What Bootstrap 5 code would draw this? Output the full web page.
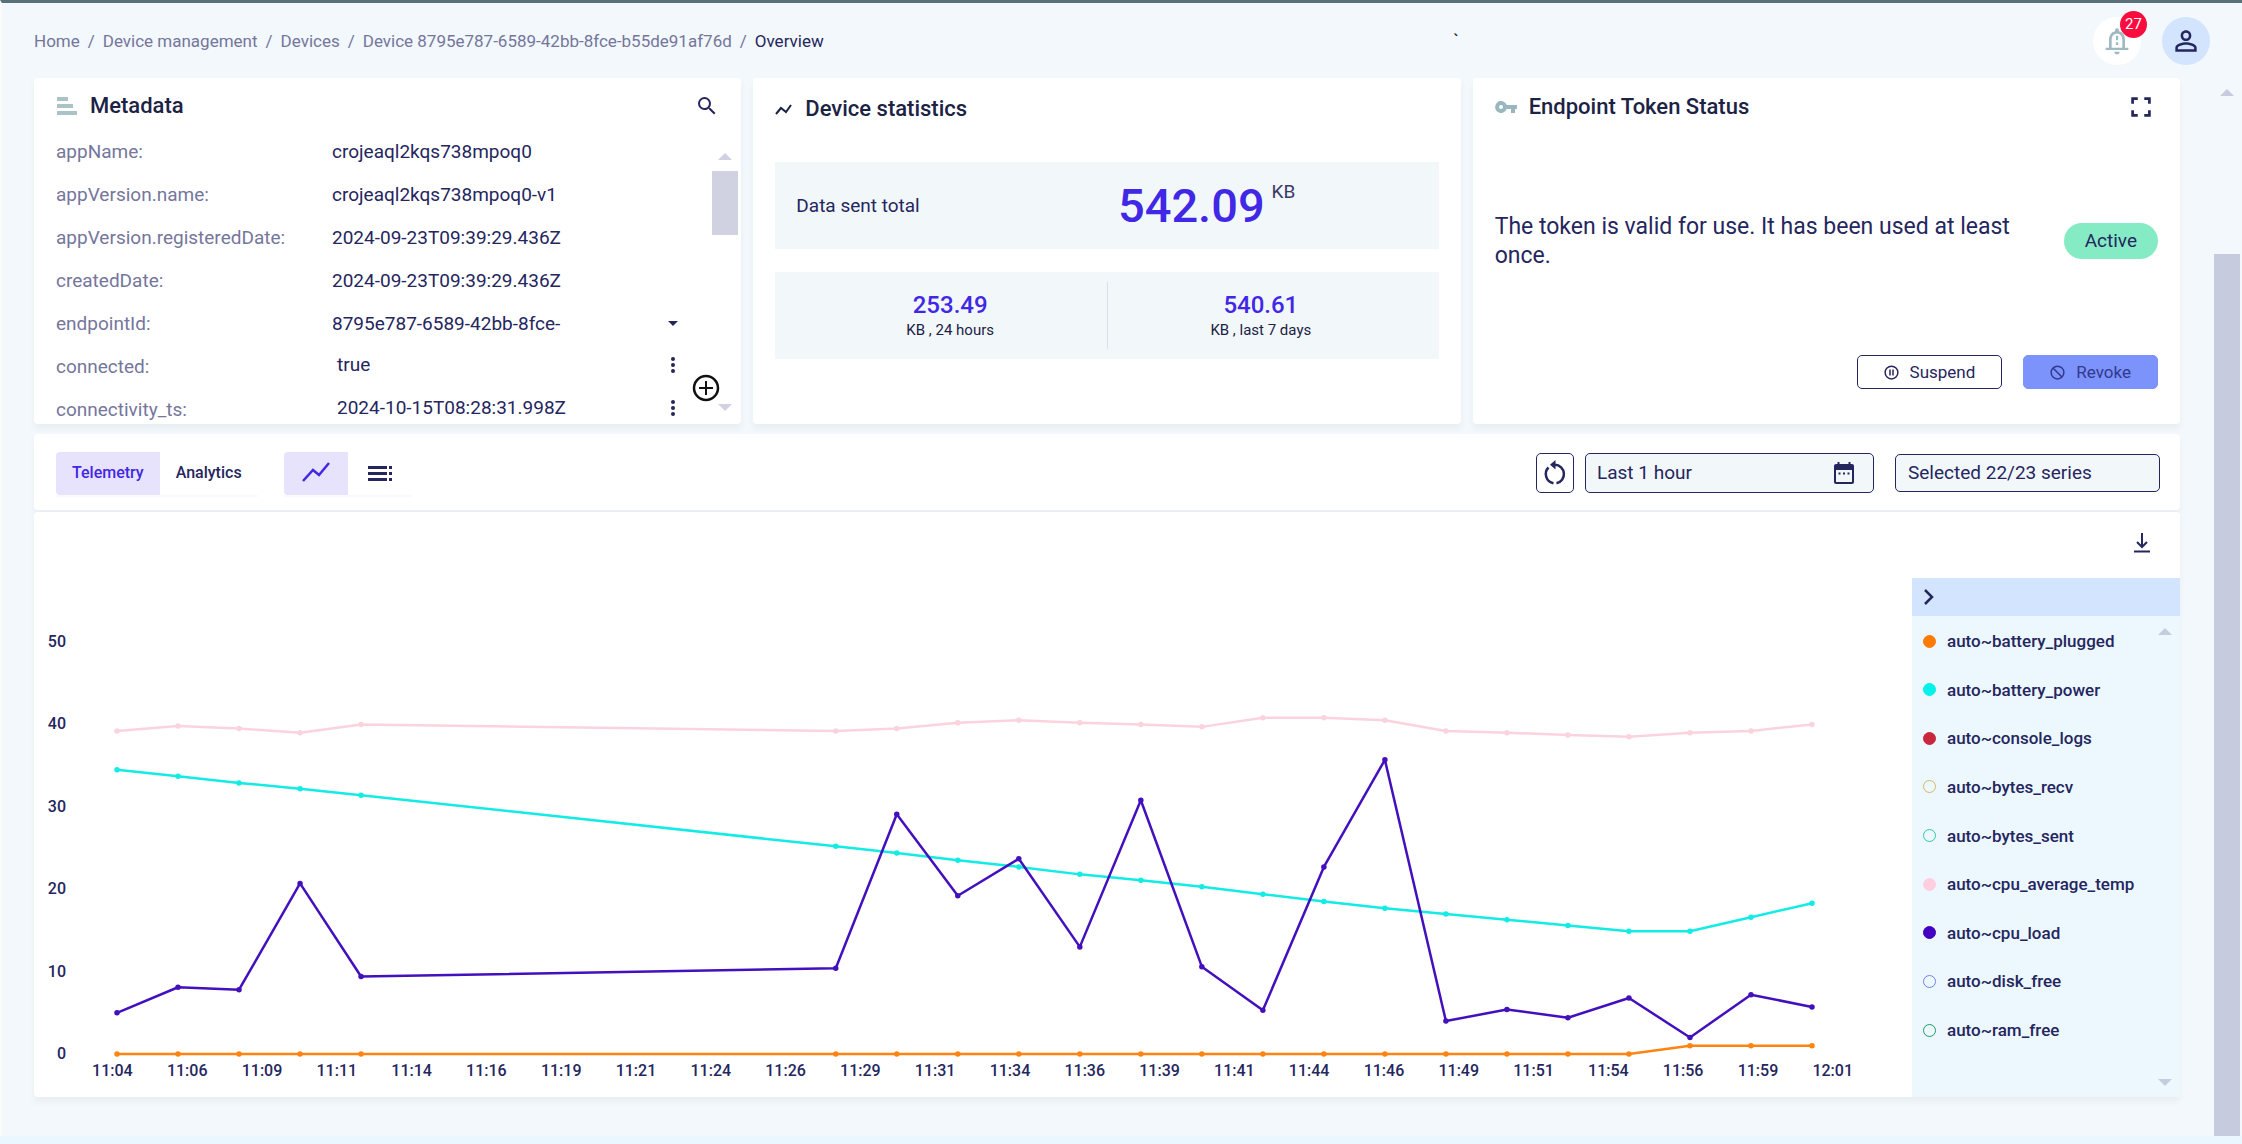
<!DOCTYPE html>
<html lang="en">
<head>
<meta charset="utf-8">
<meta name="viewport" content="width=device-width, initial-scale=1">
<title>Device overview</title>
<link href="https://cdn.jsdelivr.net/npm/bootstrap@5.3.0/dist/css/bootstrap.min.css" rel="stylesheet">
<style>
:root{--ink:#25265e;--title:#1c2244;--muted:#75769c;--accent:#4127e6;--page:#f2f8fb;--soft:#f2f7fa;--thumb:#c6cbdd;--sky:#d3e4ff}
body{font-family:Roboto,"Liberation Sans",sans-serif;color:var(--ink);background:#ebf7ff;font-size:19px;line-height:24px}
.shell{min-height:calc(100vh - 8px);background:var(--page);border-top:3px solid #5b7179;border-left:2px solid #fafcfd}
.topbar{height:75px;padding:0 32px}
.breadcrumb{font-size:17px;--bs-breadcrumb-divider-color:#75769c;--bs-breadcrumb-item-padding-x:8px}
.breadcrumb a{color:var(--muted);text-decoration:none}
.breadcrumb .active{color:var(--ink)}
.round-btn{width:48px;height:48px;border-radius:50%;border:0;padding:0;display:grid;place-items:center;position:relative;background:#fff;color:#9fb9c1}
.round-btn.user{background:var(--sky);color:var(--ink);margin-left:21px}
.count{position:absolute;top:-6px;right:-6px;width:27px;height:27px;border-radius:50%;background:#fb0c3f;color:#fff;font-size:15px;line-height:27px;text-align:center}
.stray{margin-right:634px;color:#222}
.content{padding:0 34px 39px 32px;gap:10px}
.panel{background:#fff;border-radius:4px;box-shadow:0 5px 6px rgba(60,60,60,.05)}
.tiles{display:grid;grid-template-columns:repeat(3,minmax(0,1fr));gap:12px}
.tile{height:346px;padding:0 22px;display:flex;flex-direction:column}
.tile-title{font-size:22px;line-height:28px;font-weight:500;color:var(--title);margin:0}
.tile-head{height:58px;gap:12px}
.icon-btn{border:0;background:none;padding:0;color:var(--ink);display:grid;place-items:center}
svg{display:block;fill:currentColor;flex:none}
svg.line{fill:none;stroke:currentColor;stroke-width:2}
.meta-wrap{margin-right:-19px}
.meta{overflow:hidden;margin:-4px 0 0;flex:1;display:grid;grid-template-columns:276px 1fr 26px;grid-auto-rows:43px}
.meta dl{display:contents}
.meta-row{grid-column:1/3;display:grid;grid-template-columns:subgrid;align-items:center}
.meta dt{font-weight:400;color:var(--muted)}
.meta dd{margin:0;display:flex;justify-content:space-between;align-items:center}
.meta dd.nest{padding:0 0 5px 5px}
.meta .icon-btn{width:16px;margin-right:5px}
.add{position:absolute;right:17px;bottom:21px}
.meta-rail{--thumb:#d0d2e2;position:relative;padding:18px 0 13px}
.meta-thumb{width:26px;height:64px;margin-top:11px;background:var(--thumb)}
.rail{display:flex;flex-direction:column;align-items:center}
.tri-up,.tri-down{border:7px solid transparent;width:0;height:0;border-top-width:0;border-bottom:7px solid var(--thumb)}
.tri-down{border-bottom-width:0;border-top:7px solid var(--thumb)}
.stat{background:var(--soft);height:87px}
.stat-total{margin-top:26px;margin-bottom:23px}
.stat-total .w-50:first-child{padding-left:21px}
.stat-value{gap:7px;padding-left:11px}
.big{font-size:47px;line-height:48px;font-weight:500;color:var(--accent)}
.unit{line-height:20px;color:#3a3b68}
.mid{font-size:24px;line-height:28px;font-weight:500;color:var(--accent)}
.cap{font-size:15px;line-height:22px;color:var(--title)}
.half{padding-left:18px}
.half+.half{padding:0 24px 0 0}
.half+.half::before{content:"";position:absolute;left:0;top:10px;bottom:10px;border-left:1px solid #d9e0e6}
.msg{font-size:23px;line-height:29px;width:530px;margin:0 0 10px}
.state{background:#84ebc4;border-radius:18px;height:36px;line-height:36px;padding:0 21px;margin-bottom:10px}
.acts{gap:21px;margin-bottom:35px}
.act{height:34px;border:1px solid var(--ink);border-radius:5px;font-size:17px;line-height:24px;padding:0 26px;background:#fff;color:var(--ink);display:flex;align-items:center;gap:11px}
.act.revoke{background:#7b93fb;border-color:#7b93fb;color:#33388f;padding:0 26px}
.tools{height:76px;padding:2px 20px 0 22px}
.seg{border:0;border-radius:0;background:none;height:43px;padding:0 16px;font-size:16px;font-weight:500;color:var(--ink)}
.seg:first-child{border-radius:4px 0 0 4px}
.seg.on{background:#e7e3fc;color:var(--accent)}
.segs{box-shadow:0 2px 1px rgba(0,0,0,.02)}
.segs+.segs{margin-left:26px}
.box{border:1px solid var(--ink);border-radius:5px;background:var(--soft);color:var(--ink);height:40px}
.reload{width:38px;background:#fff;padding:0}
.range{width:289px;margin:0 21px 0 11px;padding:0 16px 0 11px}
.box input,.sel{font-size:19px;line-height:24px;color:var(--ink);background:none;border:0;outline:0;min-width:0}
.sel{appearance:none;border:1px solid var(--ink);border-radius:5px;background:var(--soft);height:38px;width:265px;padding:0 12px}
.chart-panel{margin-top:-8px}
.chart-head{height:66px;padding:0 28px 4px}
.chart{padding-top:57px;font-size:16px;font-weight:500}
.y-axis{width:32px;height:426px;line-height:14px;text-align:right;display:flex;flex-direction:column;justify-content:space-between}
.plot{margin:7px 100px 7px 51px}
.plot svg{width:100%;height:412px;overflow:visible}
.plot path{fill:none;stroke-linecap:round;stroke-linejoin:round;vector-effect:non-scaling-stroke}
.x-axis{margin:0 42px 16px 41px;line-height:20px}
.x-axis span{flex:1 1 0;text-align:center}
.legend{width:268px;background:#ecf8fe}
.legend-head{height:38px;background:var(--sky);padding:0 10px}
.legend ul{display:flex;flex-direction:column;justify-content:space-between;margin:13px 0 55px;padding:0 0 0 11px;list-style:none;flex:1}
.legend label{display:flex;align-items:center;gap:11px;font-size:17px;font-weight:500}
.legend input{appearance:none;width:13px;height:13px;border:1px solid var(--c);border-radius:50%;margin:0}
.legend input:checked{background:var(--c)}
.legend-rail{padding:12px 8px 11px}
.page-rail{width:28px;padding:11px 2px 0 0}
.page-thumb{width:26px;flex:1;margin-top:158px;background:var(--thumb)}
</style>
</head>
<body>
<div class="shell d-flex flex-column">
  <header class="topbar d-flex align-items-center">
    <nav aria-label="breadcrumb"><ol class="breadcrumb mb-0">
      <li class="breadcrumb-item"><a href="#">Home</a></li>
      <li class="breadcrumb-item"><a href="#">Device management</a></li>
      <li class="breadcrumb-item"><a href="#">Devices</a></li>
      <li class="breadcrumb-item"><a href="#">Device 8795e787-6589-42bb-8fce-b55de91af76d</a></li>
      <li class="breadcrumb-item active" aria-current="page">Overview</li>
    </ol></nav>
    <span class="stray ms-auto">`</span>
    <button class="round-btn" aria-label="Notifications">
      <svg width="32" height="32" viewBox="0 0 24 24"><path d="M12 22c1.100 0 2-.9 2-2h-4c0 1.100.9 2 2 2zm6-5v-6c0-3.070-1.630-5.640-4.500-6.320V4c0-.83-.67-1.500-1.500-1.500s-1.500.67-1.500 1.500v.68C7.640 5.360 6 7.920 6 11v6H3.500v1.700h17V17zm-2 0H8v-6c0-2.480 1.510-4.500 4-4.500s4 2.020 4 4.500v6zM11.200 8h1.700v3.500h-1.700zm0 5h1.700v2h-1.700z"/></svg>
      <span class="count">27</span>
    </button>
    <button class="round-btn user" aria-label="Account">
      <svg width="32" height="32" viewBox="0 0 24 24"><path d="M12 5.900a2.100 2.100 0 1 1 0 4.200 2.100 2.100 0 0 1 0-4.200m0 9c2.970 0 6.100 1.460 6.100 2.100v1.100H5.900V17c0-.64 3.130-2.100 6.100-2.100M12 4C9.790 4 8 5.790 8 8s1.790 4 4 4 4-1.790 4-4-1.790-4-4-4zm0 9c-2.670 0-8 1.340-8 4v3h16v-3c0-2.660-5.330-4-8-4z"/></svg>
    </button>
  </header>

  <div class="d-flex flex-fill">
    <main class="content d-flex flex-column flex-fill">
      <div class="tiles">
        <section class="panel tile">
          <div class="tile-head d-flex align-items-center">
            <svg width="22" height="22" viewBox="0 0 22 22" color="#a9c3c6"><path d="M1 2h11v4H1zM1 9h16v4H1zM1 16h20v4H1z"/></svg>
            <h2 class="tile-title">Metadata</h2>
            <button class="icon-btn ms-auto" aria-label="Search"><svg width="24" height="24" viewBox="0 0 24 24"><path d="M15.500 14h-.79l-.28-.27A6.470 6.470 0 0 0 16 9.500 6.500 6.500 0 1 0 9.500 16c1.610 0 3.090-.59 4.230-1.570l.27.28v.79l5 4.990L20.490 19l-4.990-5zm-6 0C7.010 14 5 11.990 5 9.500S7.010 5 9.500 5 14 7.010 14 9.500 11.990 14 9.500 14z"/></svg></button>
          </div>
          <div class="meta-wrap d-flex flex-fill overflow-hidden">
            <div class="meta flex-fill">
              <dl>
                <div class="meta-row"><dt>appName:</dt><dd>crojeaql2kqs738mpoq0</dd></div>
                <div class="meta-row"><dt>appVersion.name:</dt><dd>crojeaql2kqs738mpoq0-v1</dd></div>
                <div class="meta-row"><dt>appVersion.registeredDate:</dt><dd>2024-09-23T09:39:29.436Z</dd></div>
                <div class="meta-row"><dt>createdDate:</dt><dd>2024-09-23T09:39:29.436Z</dd></div>
                <div class="meta-row"><dt>endpointId:</dt><dd>8795e787-6589-42bb-8fce-<button class="icon-btn" aria-label="Expand"><svg width="10" height="6" viewBox="0 0 10 6"><path d="M0 0h10L5 5z"/></svg></button></dd></div>
                <div class="meta-row"><dt>connected:</dt><dd class="nest">true<button class="icon-btn" aria-label="More"><svg width="6" height="18" viewBox="0 0 6 18"><circle cx="3" cy="3" r="2"/><circle cx="3" cy="9" r="2"/><circle cx="3" cy="15" r="2"/></svg></button></dd></div>
                <div class="meta-row"><dt>connectivity_ts:</dt><dd class="nest">2024-10-15T08:28:31.998Z<button class="icon-btn" aria-label="More"><svg width="6" height="18" viewBox="0 0 6 18"><circle cx="3" cy="3" r="2"/><circle cx="3" cy="9" r="2"/><circle cx="3" cy="15" r="2"/></svg></button></dd></div>
              </dl>
            </div>
            <div class="rail meta-rail">
              <div class="tri-up"></div>
              <div class="meta-thumb"></div>
              <div class="tri-down mt-auto"></div>
              <button class="icon-btn add" aria-label="Add"><svg width="30" height="30" viewBox="0 0 30 30"><circle cx="15" cy="15" r="12" fill="#fff" stroke="#111" stroke-width="2.500"/><path d="M14 8h2v6h6v2h-6v6h-2v-6H8v-2h6z" fill="#111"/></svg></button>
            </div>
          </div>
        </section>

        <section class="panel tile">
          <div class="tile-head d-flex align-items-center pt-1">
            <svg class="line" width="18" height="18" viewBox="0 0 18 18" color="#1c2244"><path d="M1 14l5-6 5 4 5-7"/></svg>
            <h2 class="tile-title">Device statistics</h2>
          </div>
          <div class="stat stat-total d-flex align-items-center">
            <div class="w-50">Data sent total</div>
            <div class="stat-value d-flex"><span class="big">542.09</span><span class="unit">KB</span></div>
          </div>
          <div class="stat d-flex text-center">
            <div class="half w-50 d-flex flex-column justify-content-center"><span class="mid">253.49</span><span class="cap">KB , 24 hours</span></div>
            <div class="half w-50 d-flex flex-column justify-content-center position-relative"><span class="mid">540.61</span><span class="cap">KB , last 7 days</span></div>
          </div>
        </section>

        <section class="panel tile">
          <div class="tile-head d-flex align-items-center">
            <svg width="22" height="12" viewBox="0 0 22 12" color="#9ab6bf"><path fill-rule="evenodd" d="M11.700 4A6 6 0 1 0 11.700 8H16v4h4V8h2V4zM6 8a2 2 0 1 1 0-4 2 2 0 0 1 0 4z"/></svg>
            <h2 class="tile-title">Endpoint Token Status</h2>
            <button class="icon-btn ms-auto me-1" aria-label="Full screen"><svg width="26" height="26" viewBox="0 0 24 24"><path d="M3 3h6v2.500H5.500V9H3zM15 3h6v6h-2.500V5.500H15zM3 15h2.500v3.500H9V21H3zM18.500 15H21v6h-6v-2.500h3.500z"/></svg></button>
          </div>
          <div class="d-flex align-items-center justify-content-between flex-fill">
            <p class="msg">The token is valid for use. It has been used at least once.</p>
            <span class="state">Active</span>
          </div>
          <div class="acts d-flex justify-content-end">
            <button class="act"><svg class="line" width="15" height="15" viewBox="0 0 20 20"><circle cx="10" cy="10" r="8.500"/><path d="M8 6v8M12 6v8"/></svg>Suspend</button>
            <button class="act revoke"><svg class="line" width="15" height="15" viewBox="0 0 20 20"><circle cx="10" cy="10" r="8.500"/><path d="M4 4l12 12"/></svg>Revoke</button>
          </div>
        </section>
      </div>

      <section class="panel tools d-flex align-items-center">
        <div class="segs d-flex" role="group" aria-label="Data view">
          <button class="seg on">Telemetry</button><button class="seg">Analytics</button>
        </div>
        <div class="segs d-flex" role="group" aria-label="Display">
          <button class="seg on" aria-label="Chart"><svg class="line" width="32" height="32" viewBox="0 0 32 32"><path d="M3 24l10-11 6 5 10-12" stroke-width="2.500"/></svg></button>
          <button class="seg" aria-label="List"><svg width="32" height="32" viewBox="0 0 32 32"><path d="M4 9h19v3H4zM4 15h19v3H4zM4 21h19v3H4zM25 9h3v3h-3zM25 15h3v3h-3zM25 21h3v3h-3z"/></svg></button>
        </div>
        <button class="box reload ms-auto" aria-label="Reload"><svg class="line mx-auto" width="28" height="28" viewBox="0 0 28 28"><path d="M7.500 8.500a9.300 9.300 0 0 0 5 15.700M15.500 24.200A9.300 9.300 0 0 0 14 5.800" stroke-width="2.500"/><path d="M14.500 1v9.500L9 5.800z" fill="currentColor" stroke="none"/></svg></button>
        <div class="box range d-flex align-items-center">
          <input class="flex-fill p-0" type="text" value="Last 1 hour" readonly aria-label="Time range">
          <button class="icon-btn" aria-label="Pick dates"><svg width="26" height="26" viewBox="0 0 26 26"><path fill-rule="evenodd" d="M6.500 2h2v2h9V2h2v2H21a2 2 0 0 1 2 2v16a2 2 0 0 1-2 2H5a2 2 0 0 1-2-2V6a2 2 0 0 1 2-2h1.500zM5 10v11.500q0 .5.5.5h15q.5 0 .5-.5V10z"/><path d="M7.500 12.500h2v2h-2zM12 12.500h2v2h-2zM16.500 12.500h2v2h-2z"/></svg></button>
        </div>
        <select class="sel" aria-label="Series"><option>Selected 22/23 series</option></select>
      </section>

      <section class="panel chart-panel">
        <div class="chart-head d-flex align-items-center justify-content-end">
          <button class="icon-btn" aria-label="Download"><svg class="line" width="20" height="22" viewBox="0 0 20 22"><path d="M10 1v14M5 10l5 5 5-5"/><path d="M2 19.500h16"/></svg></button>
        </div>
        <div class="d-flex">
          <div class="chart flex-fill">
            <div class="d-flex">
              <div class="y-axis"><span>50</span><span>40</span><span>30</span><span>20</span><span>10</span><span>0</span></div>
              <div class="plot flex-fill"><svg id="plot" viewBox="0 0 27.780 50" preserveAspectRatio="none" role="img" aria-label="Telemetry series"></svg></div>
            </div>
            <div class="x-axis d-flex" id="xAxis"></div>
          </div>
          <aside class="legend d-flex flex-column">
            <div class="legend-head d-flex align-items-center"><button class="icon-btn" aria-label="Collapse"><svg class="line" width="14" height="18" viewBox="0 0 14 18"><path d="M3 2l7 7-7 7" stroke-width="2.500"/></svg></button></div>
            <div class="d-flex flex-fill">
              <ul id="legend"></ul>
              <div class="rail legend-rail"><div class="tri-up"></div><div class="tri-down mt-auto"></div></div>
            </div>
          </aside>
        </div>
      </section>
    </main>
    <div class="rail page-rail"><div class="tri-up"></div><div class="page-thumb"></div></div>
  </div>
</div>
<script src="https://cdn.jsdelivr.net/npm/bootstrap@5.3.0/dist/js/bootstrap.bundle.min.js"></script>
<script>
// sample positions: five readings, a gap, then seventeen more
const xs = [0,1,2,3,4].concat(Array.from({length:17}, (_, i) => 11.78 + i));
const series = [
  ['#ff8412', Array(19).fill(0).concat([1,1,1])],
  ['#12ece4', [34.5,33.7,32.9,32.2,31.4,25.2,24.4,23.5,22.7,21.8,21.1,20.3,19.4,18.5,17.7,17,16.3,15.6,14.9,14.9,16.6,18.3]],
  ['#fbd3df', [39.2,39.8,39.5,39,40,39.2,39.5,40.2,40.5,40.2,40,39.7,40.8,40.8,40.5,39.2,39,38.7,38.5,39,39.2,40]],
  ['#4310bd', [5,8.1,7.8,20.7,9.4,10.4,29.1,19.2,23.7,13,30.8,10.6,5.3,22.7,35.7,4,5.4,4.4,6.8,2,7.2,5.7]]
];
document.getElementById('plot').innerHTML = series.map(([color, v]) => {
  const pts = v.map((y, i) => xs[i] + ' ' + (50 - y));
  return `<path d="M${pts.join('L')}" stroke="${color}" stroke-width="2.5"/>` +
         `<path d="${pts.map(p => 'M' + p + 'h0').join('')}" stroke="${color}" stroke-width="5.5"/>`;
}).join('');
document.getElementById('xAxis').innerHTML = ('11:04 11:06 11:09 11:11 11:14 11:16 11:19 11:21 11:24 11:26 11:29 11:31 ' +
  '11:34 11:36 11:39 11:41 11:44 11:46 11:49 11:51 11:54 11:56 11:59 12:01').split(' ').map(t => `<span>${t}</span>`).join('');
document.getElementById('legend').innerHTML = [
  ['battery_plugged','#ff7a00',1],['battery_power','#00f2ea',1],['console_logs','#c9273e',1],
  ['bytes_recv','#d4b766',0],['bytes_sent','#2fc9ab',0],['cpu_average_temp','#ffcfe0',1],
  ['cpu_load','#4400c0',1],['disk_free','#6f83f0',0],['ram_free','#219a5c',0]
].map(([n, c, on]) => `<li><label><input type="checkbox" style="--c:${c}"${on ? ' checked' : ''}>auto~${n}</label></li>`).join('');
</script>
</body>
</html>
